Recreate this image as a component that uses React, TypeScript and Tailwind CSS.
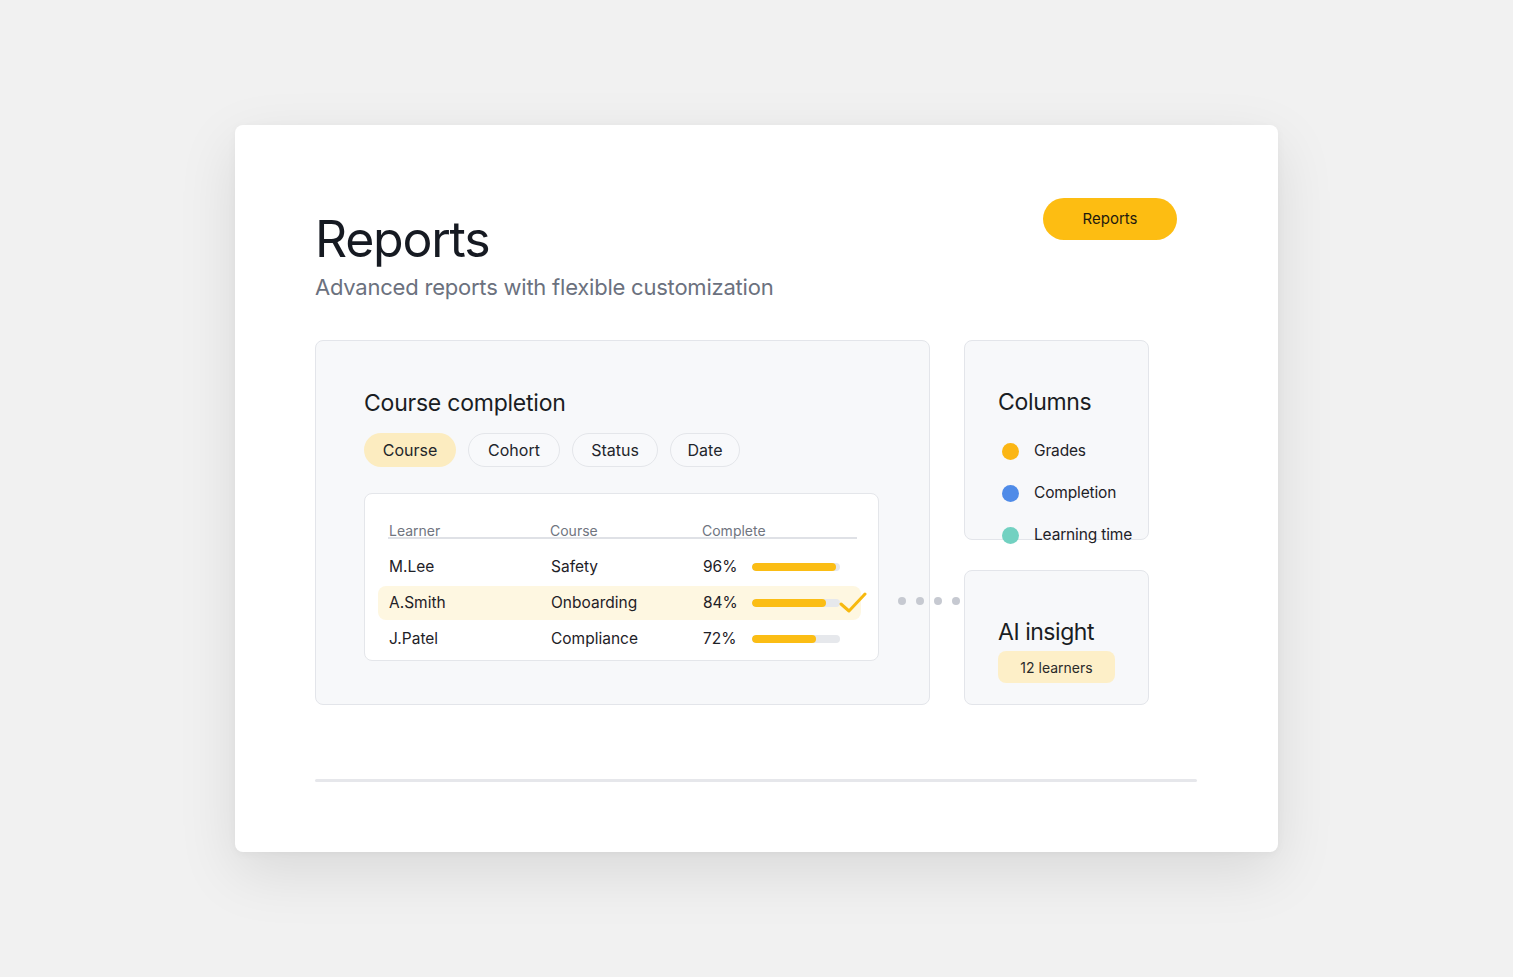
import React from "react";

const rows = [
  { name: "M.Lee", course: "Safety", pct: "96%", fill: 84, hl: false },
  { name: "A.Smith", course: "Onboarding", pct: "84%", fill: 74, hl: true },
  { name: "J.Patel", course: "Compliance", pct: "72%", fill: 64, hl: false },
];

const chips = [
  { t: "Cohort", w: "w-[92px]" },
  { t: "Status", w: "w-[86px]" },
  { t: "Date", w: "w-[70px]" },
];

export default function App() {
  return (
    <div
      className="w-full min-h-screen bg-[#f1f1f1] flex items-center justify-center"
      style={{ fontFamily: "Inter, 'Noto Sans', sans-serif" }}
    >
      <div className="w-[1043px] h-[727px] bg-white rounded-[8px] shadow-[0_20px_60px_rgba(0,0,0,0.10),0_2px_8px_rgba(0,0,0,0.04)] pl-[80px] pr-[81px] pt-[78px] flex flex-col">
        {/* header */}
        <div className="flex justify-between items-start">
          <div className="flex flex-col">
            <h1 className="text-[50px] leading-[72px] tracking-[-0.025em] text-[#161a22] font-normal">Reports</h1>
            <p className="text-[22px] leading-[30px] tracking-[-0.01em] text-[#6b717e] -mt-[3px]">
              Advanced reports with flexible customization
            </p>
          </div>
          <button className="-mt-[5px] mr-[20px] w-[134px] h-[42px] rounded-full bg-[#fdbd12] text-[15px] text-[#1f1a0e]">
            Reports
          </button>
        </div>

        {/* content */}
        <div className="relative flex gap-[34px] mt-[38px]">
          {/* main panel */}
          <div className="w-[615px] h-[365px] rounded-[8px] border border-[#e3e5ea] bg-[#f7f8fa] pl-[48px] pt-[46px]">
            <div className="text-[23px] leading-[32px] tracking-[-0.01em] text-[#1a1d23]">Course completion</div>
            <div className="flex gap-[12px] mt-[14px]">
              <span className="h-[34px] w-[92px] justify-center rounded-full bg-[#fcecc0] text-[16px] text-[#22252b] flex items-center">Course</span>
              {chips.map((c) => (
                <span key={c.t} className={`h-[34px] ${c.w} justify-center rounded-full border border-[#e4e6ea] bg-[#f8f9fb] text-[16px] text-[#22252b] flex items-center`}>
                  {c.t}
                </span>
              ))}
            </div>
            <div className="mt-[26px] w-[515px] h-[168px] rounded-[8px] border border-[#e4e6ea] bg-white pl-[13px] pr-[17px] pt-[30px]">
              <div className="ml-[10px] mr-[4px] border-b-2 border-[#dfe1e6] flex text-[14px] leading-[13px] text-[#70757f]">
                <span className="w-[162px] shrink-0 pl-[1px]">Learner</span>
                <span className="w-[152px] shrink-0">Course</span>
                <span>Complete</span>
              </div>
              <div className="flex flex-col mt-[11px]">
                {rows.map((r) => (
                  <div
                    key={r.name}
                    className={`relative h-[34px] mb-[2px] rounded-[8px] flex items-center pl-[11px] text-[15.5px] text-[#1e2127] ${r.hl ? "bg-[#fef7e1]" : ""}`}
                  >
                    <span className="w-[162px] shrink-0">{r.name}</span>
                    <span className="w-[152px] shrink-0">{r.course}</span>
                    <span className="w-[49px] shrink-0">{r.pct}</span>
                    <div className="w-[88px] shrink-0 h-[8px] rounded-full bg-[#e6e8ec] overflow-hidden">
                      <div className="h-full rounded-full bg-[#fbbd14]" style={{ width: r.fill }} />
                    </div>
                    {r.hl && (
                      <svg width="30" height="22" viewBox="0 0 30 22" className="absolute left-[460px] top-[5px]">
                        <path d="M3 13 L11 20 L27 3" fill="none" stroke="#f7b90f" strokeWidth="3" strokeLinecap="round" strokeLinejoin="round" />
                      </svg>
                    )}
                  </div>
                ))}
              </div>
            </div>
          </div>

          {/* side column */}
          <div className="w-[185px] flex flex-col gap-[30px]">
            <div className="h-[200px] rounded-[8px] border border-[#e3e5ea] bg-[#f7f8fa] pl-[33px] pt-[45px]">
              <div className="text-[23px] leading-[32px] tracking-[-0.015em] text-[#1a1d23]">Columns</div>
              <div className="flex flex-col gap-[18px] mt-[21px]">
                {[
                  ["Grades", "bg-[#fbb614]"],
                  ["Completion", "bg-[#4f8be8]"],
                  ["Learning time", "bg-[#72d1c1]"],
                ].map(([t, c]) => (
                  <div key={t} className="flex items-center h-[24px] text-[15.5px] tracking-[-0.01em] text-[#1e2127] whitespace-nowrap">
                    <span className={`w-[17px] h-[17px] shrink-0 rounded-full ${c} ml-[4px] mr-[15px]`} />
                    {t}
                  </div>
                ))}
              </div>
            </div>
            <div className="h-[135px] rounded-[8px] border border-[#e3e5ea] bg-[#f7f8fa] pl-[33px] pt-[45px]">
              <div className="text-[23px] leading-[32px] tracking-[-0.02em] text-[#1a1d23]">AI insight</div>
              <div className="mt-[3px] w-[117px] h-[32px] rounded-[8px] bg-[#fdefc8] flex items-center justify-center text-[14px] text-[#2a2a2a]">
                12 learners
              </div>
            </div>
          </div>

          {/* connector dots */}
          <div className="absolute left-[583px] top-[257px] flex gap-[10px]">
            {[0, 1, 2, 3].map((i) => (
              <span key={i} className="w-[8px] h-[8px] rounded-full bg-[#c6c9d1]" />
            ))}
          </div>
        </div>

        <div className="mt-[74px] h-[3px] bg-[#e6e7eb] rounded-full" />
      </div>
    </div>
  );
}
